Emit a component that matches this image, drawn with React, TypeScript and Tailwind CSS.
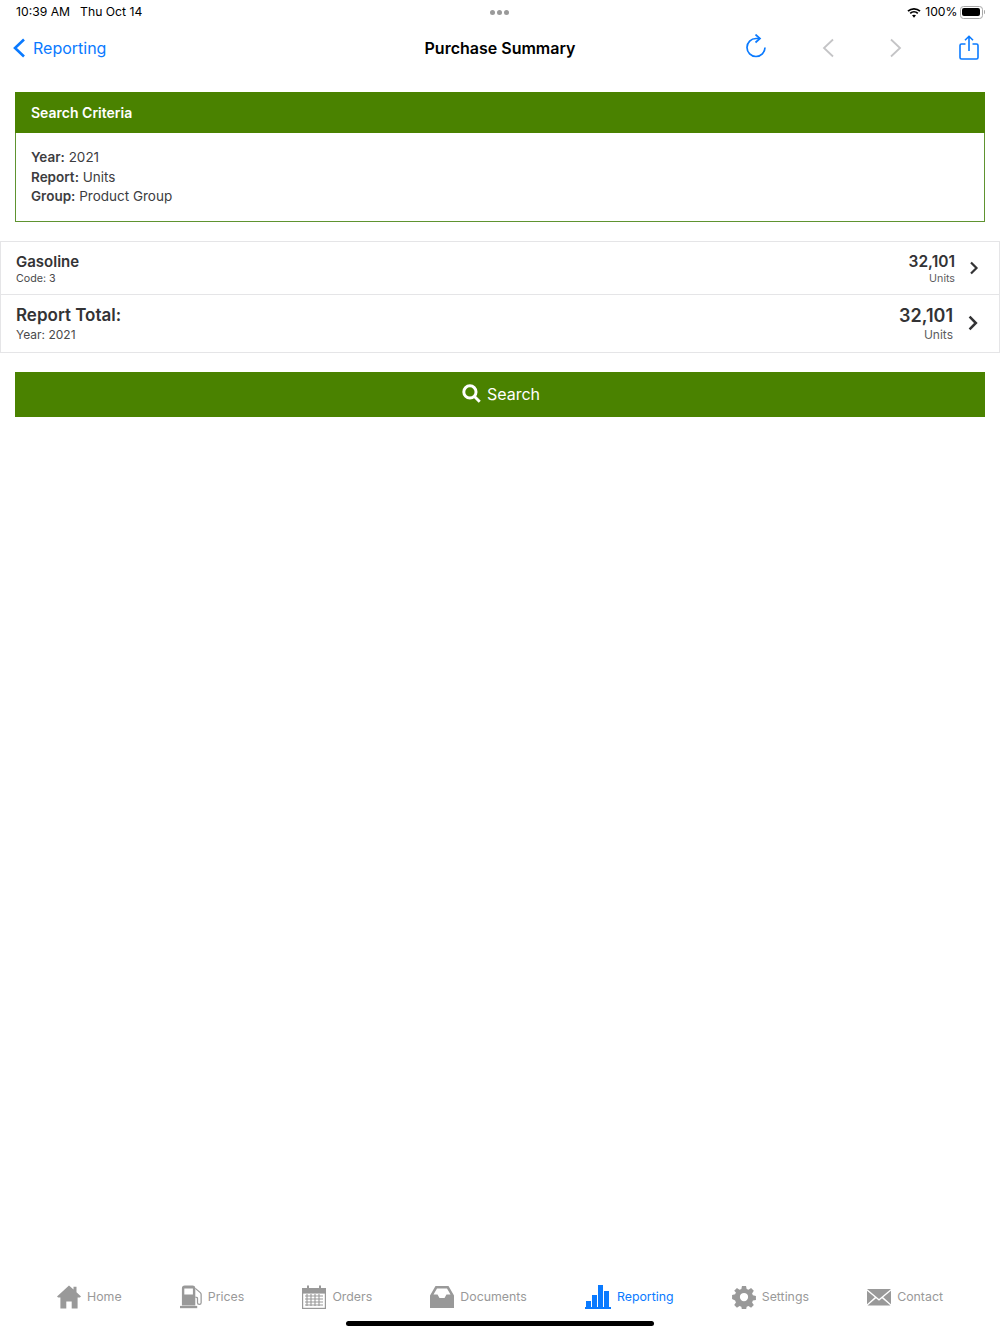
import React from "react";

const GREEN = "bg-[#4a8200]";

// Bottom tab icons, drawn to match the app's glyph set
const HomeIcon = () => (
  <svg width="24" height="24" viewBox="0 0 24 24" fill="currentColor">
    <path d="M12 .5 16.5 4.6V1.8h3v5.5L24 11.5l-1.2.9H20.6V23.6h-5.9v-7.2H9.3v7.2H3.4V12.4H1.2L0 11.5z" />
  </svg>
);

const PumpIcon = () => (
  <svg width="22" height="24" viewBox="0 0 23 24" fill="currentColor">
    <path fillRule="evenodd" d="M2 3a3 3 0 0 1 3-3h8a3 3 0 0 1 3 3v18H2zM4.500 3v6.500h9V3z" />
    <path d="M0 21.300h18v2.400H0z" />
    <path
      d="M16 3l5.200 4.400c.6.600.9 1.200.9 2V18c0 2.400-3.800 2.400-3.800 0v-4.400c0-1-.7-1.400-2.300-1.400"
      fill="none"
      stroke="currentColor"
      strokeWidth="1.300"
    />
  </svg>
);

const CalendarIcon = () => (
  <svg width="24" height="24" viewBox="0 0 24 24">
    <path fill="currentColor" d="M0 3h5V.5h2V3h10V.5h2V3h5v5H0z" />
    <rect x=".6" y="8" width="22.8" height="15.4" fill="none" stroke="currentColor" strokeWidth="1.200" />
    <path
      stroke="currentColor"
      strokeWidth="1.100"
      fill="none"
      d="M3 11h18M3 14h18M3 17h18M3 20h18M5 9v12M9 9v12M13 9v12M17 9v12"
    />
  </svg>
);

const InboxIcon = () => (
  <svg width="24" height="24" viewBox="0 0 24 24" fill="currentColor">
    <path fillRule="evenodd" d="M5.500 1h13L24 10.500V23H0V10.500zM7 3.500 3.500 9.500H7.500l2 3.500h5l2-3.500h4L17 3.500z" />
  </svg>
);

const BarsIcon = () => (
  <svg width="26" height="24" viewBox="0 0 26 24" fill="currentColor">
    <path d="M1 16h5v6H1zM7 10h5v12H7zM13 0h5v22h-5zM19 6h5v16h-5z" />
    <path d="M0 22h26v2H0z" />
  </svg>
);

const GearIcon = () => (
  <svg width="24" height="24" viewBox="0 0 24 24" fill="currentColor">
    <path
      fillRule="evenodd"
      d="M9.800 0h4.400l.7 3.300 2 .8 2.800-1.800 3 3-1.900 2.800.9 2 3.300.7v4.400l-3.300.7-.9 2 1.900 2.800-3 3-2.800-1.900-2 .9-.7 3.300H9.800l-.7-3.300-2-.9-2.800 1.900-3-3 1.900-2.800-.9-2L-1 14.200V9.800l3.300-.7.9-2L1.300 5.300l3-3 2.800 1.800 2-.8zM12 7.500a4.500 4.500 0 1 0 0 9 4.500 4.500 0 0 0 0-9z"
      transform="translate(1 1) scale(.917)"
    />
  </svg>
);

const MailIcon = () => (
  <svg width="24" height="24" viewBox="0 0 24 24" fill="currentColor">
    <path d="M0 4h24L12 14z" />
    <path d="M0 5.800 7.800 12.300 0 19.200zM24 5.800 16.200 12.300 24 19.200z" />
    <path d="M9 13.300 12 15.800l3-2.500 8.500 7.200H.5z" />
  </svg>
);

const tabs = [
  { label: "Home", icon: <HomeIcon /> },
  { label: "Prices", icon: <PumpIcon /> },
  { label: "Orders", icon: <CalendarIcon /> },
  { label: "Documents", icon: <InboxIcon /> },
  { label: "Reporting", icon: <BarsIcon />, active: true },
  { label: "Settings", icon: <GearIcon /> },
  { label: "Contact", icon: <MailIcon /> },
];

const Chevron = ({ dir, className }: { dir: "left" | "right"; className: string }) => (
  <svg width="14" height="20" viewBox="0 0 14 20" fill="none" stroke="currentColor" strokeWidth="1.800" className={className}>
    <path d={dir === "left" ? "M12 1.500 3 10l9 8.500" : "M2 1.500 11 10l-9 8.500"} />
  </svg>
);

const StatusBar = () => (
  <div className="relative flex h-6 shrink-0 items-center justify-between pl-4 pr-[15px] pt-px text-[12.2px] text-black">
    <div className="flex gap-[10px]">
      <span>10:39 AM</span>
      <span>Thu Oct 14</span>
    </div>
    <div className="absolute left-[490px] top-[10px] flex gap-[2px]">
      <span className="h-[5px] w-[5px] rounded-full bg-[#9a9a9a]" />
      <span className="h-[5px] w-[5px] rounded-full bg-[#9a9a9a]" />
      <span className="h-[5px] w-[5px] rounded-full bg-[#9a9a9a]" />
    </div>
    <div className="flex items-center gap-[4px]">
      <svg width="14" height="11" viewBox="0 0 14 11" fill="none" stroke="black" strokeWidth="1.800">
        <path d="M1 4.200c3.400-3.200 8.600-3.200 12 0M3.200 6.400c2.200-2 5.400-2 7.600 0" />
        <path d="M7 10.800 5 8.300c1.200-.9 2.800-.9 4 0z" fill="black" stroke="none" />
      </svg>
      <span>100%</span>
      <div className="-ml-[2px] flex items-center">
        <div className="h-[13px] w-[23px] rounded-[3.5px] border border-[#a8a8a8] p-[1.5px]">
          <div className="h-full w-full rounded-[2px] bg-black" />
        </div>
        <div className="ml-[1px] h-[4px] w-[1.5px] rounded-r-sm bg-[#a8a8a8]" />
      </div>
    </div>
  </div>
);

const NavBar = () => (
  <div className="grid h-12 shrink-0 grid-cols-[1fr_auto_1fr] items-center">
    <div className="flex items-center gap-[7px] pl-3 text-[16px] text-[#0a7aff]">
      <Chevron dir="left" className="stroke-[2.6px]" />
      <span>Reporting</span>
    </div>
    <div className="text-[16px] font-semibold text-black">Purchase Summary</div>
    <div className="flex items-center justify-end pr-[21px]">
      <svg width="22" height="26" viewBox="0 0 22 26" fill="none" stroke="#0a7aff" strokeWidth="1.700" className="mr-[54px] -mt-[2px]">
        <path d="M15 4.500H11A9 9 0 1 0 20 13.500" />
        <path d="M10.500 .5 15 4.500 10.500 8.500" />
      </svg>
      <Chevron dir="left" className="mr-[54px] -mt-[1px] text-[#c4c4c6]" />
      <Chevron dir="right" className="mr-[56px] -mt-[1px] text-[#c4c4c6]" />
      <svg width="20" height="26" viewBox="0 0 20 26" fill="none" stroke="#0a7aff" strokeWidth="1.600">
        <path d="M6.500 9H2.500A1.500 1.500 0 0 0 1 10.500v12A1.500 1.500 0 0 0 2.500 24h15a1.500 1.500 0 0 0 1.500-1.500v-12A1.500 1.500 0 0 0 17.500 9h-4" />
        <path d="M10 16V1.500M6 5.200 10 1.300l4 3.900" />
      </svg>
    </div>
  </div>
);

const SearchCriteria = () => (
  <div className="mx-[15px] mt-5 border border-[#5f9330]">
    <div className={`-m-px flex h-[41px] items-center px-[16px] text-[14px] font-semibold text-white ${GREEN}`}>
      Search Criteria
    </div>
    <div className="h-[89px] pl-[15px] pt-[16px] text-[13.5px] leading-[19.7px] text-[#3d3d3f]">
      <div><b className="font-semibold">Year:</b> 2021</div>
      <div><b className="font-semibold">Report:</b> Units</div>
      <div><b className="font-semibold">Group:</b> Product Group</div>
    </div>
  </div>
);

const SummaryRow = ({
  title,
  sub,
  large,
}: {
  title: string;
  sub: string;
  large?: boolean;
}) => (
  <div className={`flex items-center pl-[15px] pr-[20px] text-[#333335] ${large ? "h-[57px] pb-[1px]" : "h-[53px]"}`}>
    <div className="flex-1">
      <div className={large ? "text-[17px] font-semibold leading-[23px]" : "text-[15px] font-semibold leading-[21px]"}>
        {title}
      </div>
      <div className={large ? "text-[12px] leading-[15px] text-[#4a4a4c]" : "text-[10.7px] leading-[14px] text-[#4a4a4c]"}>
        {sub}
      </div>
    </div>
    <div className="text-right">
      <div className={large ? "text-[18px] font-semibold leading-[23px]" : "text-[15.5px] font-semibold leading-[21px]"}>
        32,101
      </div>
      <div className={large ? "text-[12px] leading-[15px] text-[#5c5c5e]" : "text-[10.7px] leading-[14px] text-[#5c5c5e]"}>
        Units
      </div>
    </div>
    <svg
      width={large ? 12 : 10}
      height={large ? 16 : 14}
      viewBox="0 0 10 14"
      fill="none"
      stroke="#333335"
      strokeWidth="2.200"
      className="ml-[14px]"
    >
      <path d="M2 1.500 7.500 7 2 12.500" />
    </svg>
  </div>
);

const TabBar = () => (
  <div className="flex h-[38px] shrink-0 items-center justify-between px-[57px]">
    {tabs.map((tab) => (
      <div
        key={tab.label}
        className={`flex items-center gap-[6px] text-[12.35px] ${tab.active ? "text-[#0a7aff]" : "text-[#999999]"}`}
      >
        {tab.icon}
        <span>{tab.label}</span>
      </div>
    ))}
  </div>
);

export default function App() {
  return (
    <div className="flex h-[1334px] w-[1000px] flex-col bg-white font-['Inter',sans-serif]">
      <StatusBar />
      <NavBar />
      <SearchCriteria />

      {/* Results list */}
      <div className="mt-[19px] divide-y divide-[#e5e5e7] border border-[#e5e5e7]">
        <SummaryRow title="Gasoline" sub="Code: 3" />
        <SummaryRow title="Report Total:" sub="Year: 2021" large />
      </div>

      <div className={`mx-[15px] mt-[19px] flex h-[45px] items-center justify-center gap-[6px] pb-[2px] pl-[2px] text-[16px] text-white ${GREEN}`}>
        <svg width="19" height="19" viewBox="0 0 18 18" fill="none" stroke="white" strokeWidth="2.800">
          <circle cx="7.5" cy="7.5" r="5.8" />
          <path d="m11.800 11.800 5 5" />
        </svg>
        <span>Search</span>
      </div>

      <div className="flex-1" />
      <TabBar />
      <div className="mx-auto mb-[8px] mt-[5px] h-[5px] w-[308px] rounded-full bg-black" />
    </div>
  );
}
